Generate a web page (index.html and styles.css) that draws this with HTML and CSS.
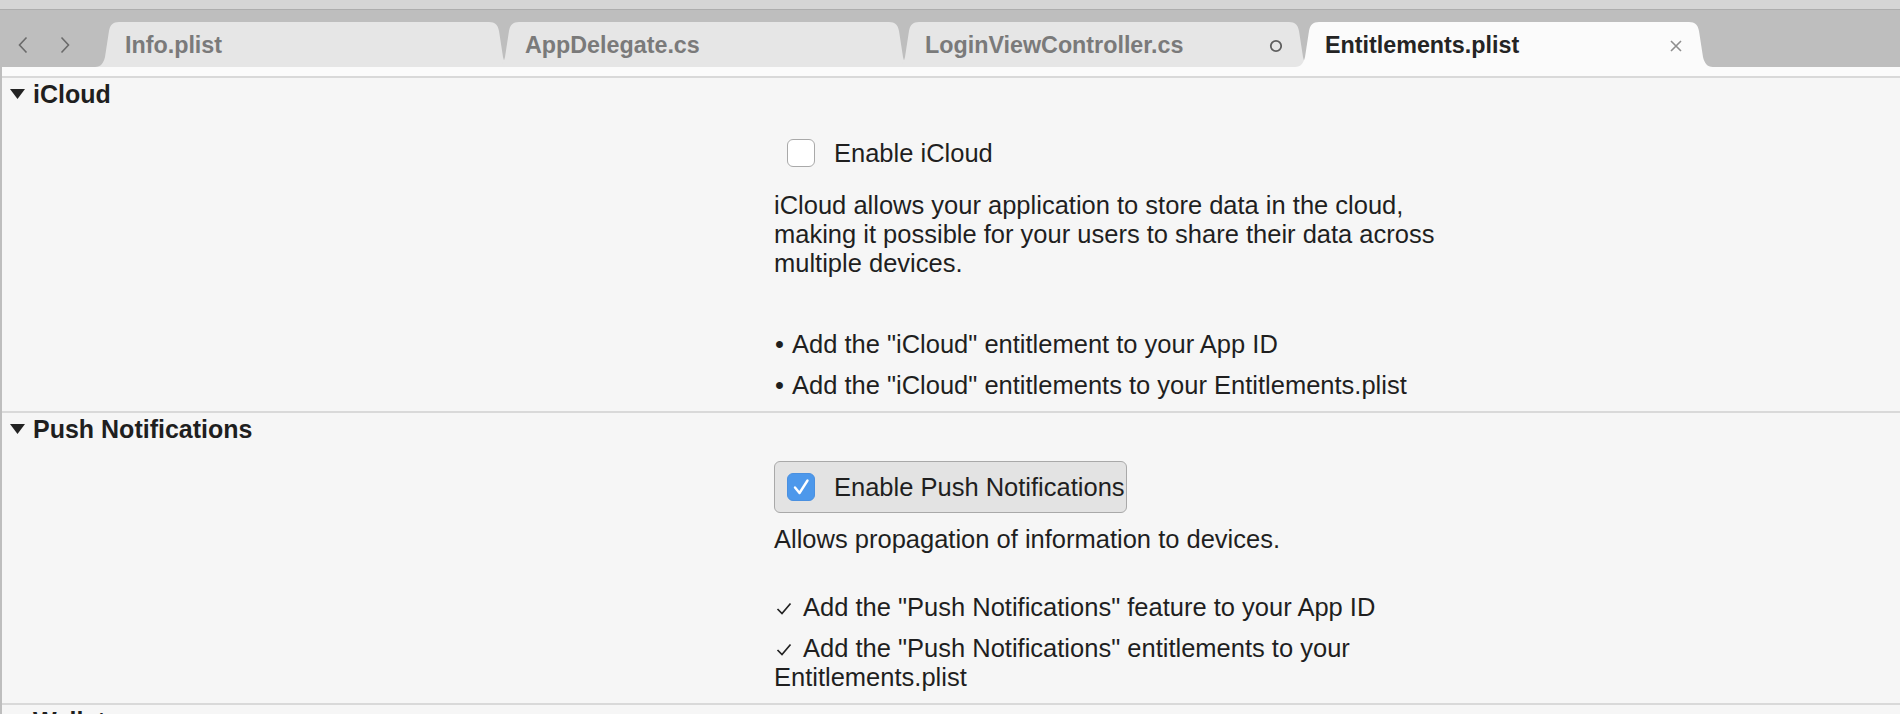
FILE: index.html
```html
<!DOCTYPE html>
<html lang="en">
<head>
<meta charset="utf-8">
<title>Entitlements.plist</title>
<link rel="stylesheet" href="styles.css">
</head>
<body>
<div class="window">
  <div class="titlestrip"></div>
  <div class="tabbar">
    <div class="nav">
      <svg class="chev" width="12" height="18" viewBox="0 0 12 18"><path d="M9.5 1.5 L2.5 9 L9.5 16.5" fill="none" stroke="#6a6a6a" stroke-width="1.6"/></svg>
      <svg class="chev" width="12" height="18" viewBox="0 0 12 18"><path d="M2.5 1.5 L9.5 9 L2.5 16.5" fill="none" stroke="#6a6a6a" stroke-width="1.6"/></svg>
    </div>
    <div class="tabs">
      <div class="tab"><span class="tab-label">Info.plist</span></div>
      <div class="tab"><span class="tab-label">AppDelegate.cs</span></div>
      <div class="tab"><span class="tab-label">LoginViewController.cs</span>
        <svg class="tab-icon" width="14" height="14" viewBox="0 0 14 14"><circle cx="7" cy="7" r="5.2" fill="none" stroke="#5f5f5f" stroke-width="1.8"/></svg>
      </div>
      <div class="tab active"><span class="tab-label">Entitlements.plist</span>
        <svg class="tab-icon" width="14" height="14" viewBox="0 0 14 14"><path d="M2 2 L12 12 M12 2 L2 12" stroke="#8e8e8e" stroke-width="1.6"/></svg>
      </div>
    </div>
  </div>
  <div class="editor">
    <div class="subbar"></div>

    <section class="cap cap-icloud">
      <h2 class="cap-head"><svg class="tri" width="15" height="10" viewBox="0 0 15 10"><path d="M0 0 H15 L7.5 10 Z" fill="#232323"/></svg>iCloud</h2>
      <div class="cap-body">
        <div class="toggle"><span class="box"></span><span class="toggle-label">Enable iCloud</span></div>
        <p class="desc">iCloud allows your application to store data in the cloud, making it possible for your users to share their data across multiple devices.</p>
        <ul class="steps">
          <li><span class="dot">•</span>Add the "iCloud" entitlement to your App ID</li>
          <li><span class="dot">•</span>Add the "iCloud" entitlements to your Entitlements.plist</li>
        </ul>
      </div>
    </section>

    <section class="cap cap-push">
      <h2 class="cap-head"><svg class="tri" width="15" height="10" viewBox="0 0 15 10"><path d="M0 0 H15 L7.5 10 Z" fill="#232323"/></svg>Push Notifications</h2>
      <div class="cap-body">
        <div class="toggle on"><span class="box checked"><svg width="28" height="28" viewBox="0 0 28 28"><path d="M8 14.5 L12.5 20 L20.5 7.5" fill="none" stroke="#ffffff" stroke-width="2.4" stroke-linecap="round" stroke-linejoin="round"/></svg></span><span class="toggle-label">Enable Push Notifications</span></div>
        <p class="desc">Allows propagation of information to devices.</p>
        <ul class="steps">
          <li><svg class="tick" width="16" height="13" viewBox="0 0 16 13"><path d="M1.5 7 L6 11.5 L14.5 1.5" fill="none" stroke="#222" stroke-width="1.7"/></svg>Add the "Push Notifications" feature to your App ID</li>
          <li><svg class="tick" width="16" height="13" viewBox="0 0 16 13"><path d="M1.5 7 L6 11.5 L14.5 1.5" fill="none" stroke="#222" stroke-width="1.7"/></svg>Add the "Push Notifications" entitlements to your Entitlements.plist</li>
        </ul>
      </div>
    </section>

    <section class="cap cap-wallet">
      <h2 class="cap-head"><svg class="tri" width="15" height="10" viewBox="0 0 15 10"><path d="M0 0 H15 L7.5 10 Z" fill="#232323"/></svg>Wallet</h2>
    </section>
  </div>
</div>
</body>
</html>
```

FILE: styles.css
```css
html, body {
  margin: 0;
  padding: 0;
  background: #f6f6f6;
  overflow: hidden;
}

body {
  font-family: "Liberation Sans", Arial, sans-serif;
  color: #1f1f1f;
}

.window {
  width: 1900px;
  height: 714px;
  overflow: hidden;
}

.titlestrip {
  height: 9px;
  background: #d5d5d5;
  border-bottom: 1px solid #adadad;
}

.tabbar {
  height: 57px;
  background: #bebebe;
  display: flex;
  align-items: flex-end;
}

.nav {
  width: 95px;
  height: 45px;
  display: flex;
  align-items: center;
  padding-left: 17px;
  gap: 30px;
  box-sizing: border-box;
  flex: none;
}

.chev {
  display: block;
  margin-top: 1px;
}

.tabs {
  display: flex;
  align-items: flex-end;
}

.tab {
  width: 418px;
  height: 45px;
  flex: none;
  display: flex;
  align-items: center;
  padding: 0 30px;
  box-sizing: border-box;
  background: #e6e6e6;
  color: #7a7a7a;
  font-weight: bold;
  font-size: 23.3px;
  clip-path: path("M0 45 C6 45 8.5 41 10 35 L14 9 C15 3 18 0 24 0 L394 0 C400 0 403 3 404 9 L408 35 C409.5 41 412 45 418 45 Z");
}

.tab + .tab {
  margin-left: -18px;
}

.tab.active {
  background: #fbfbfb;
  color: #242424;
}

.tab-label {
  flex: 1;
  padding-top: 2px;
}

.tab-icon {
  display: block;
  flex: none;
  margin-top: 2px;
}

.editor {
  border-left: 2px solid #bebebe;
  height: 648px;
  background: #f6f6f6;
}

.subbar {
  height: 9px;
  background: #fbfbfb;
  border-bottom: 2px solid #d9d9d9;
}

.cap {
  border-bottom: 2px solid #d9d9d9;
}

.cap-head {
  margin: 1px 0 0 0;
  height: 30px;
  display: flex;
  align-items: center;
  padding-left: 8px;
  font-size: 25px;
  line-height: 30px;
  font-weight: bold;
  color: #1f1f1f;
}

.tri {
  display: block;
  margin-right: 8px;
  flex: none;
}

.cap-body {
  padding-left: 772px;
  font-size: 25.5px;
  line-height: 29px;
}

.cap-icloud .cap-body {
  padding-top: 18px;
  padding-bottom: 11.5px;
}

.cap-push .cap-body {
  padding-top: 17px;
  padding-bottom: 11px;
}

.toggle {
  display: inline-flex;
  align-items: center;
  height: 52px;
  box-sizing: border-box;
  padding: 0 1px 0 12px;
  border: 1.5px solid transparent;
  border-radius: 6px;
  vertical-align: top;
}

.toggle.on {
  background: #e3e3e3;
  border-color: #a9a9a9;
}

.box {
  width: 28px;
  height: 28px;
  box-sizing: border-box;
  border: 1px solid #a9a9a9;
  border-radius: 6px;
  background: #ffffff;
  margin-right: 19px;
  flex: none;
  display: flex;
}

.box.checked {
  background: #4d98eb;
  border-color: #4a90e0;
}

.box svg {
  display: block;
  margin: -1px;
}

.toggle-label {
  color: #1f1f1f;
  padding-top: 1px;
}

.desc {
  max-width: 680px;
  margin: 11.5px 0 0 0;
}

.cap-push .desc {
  margin-top: 12px;
}

.steps {
  list-style: none;
  margin: 52px 0 0 0;
  padding: 0;
  max-width: 680px;
  display: flex;
  flex-direction: column;
  gap: 12px;
}

.cap-push .steps {
  margin-top: 39px;
}

.dot {
  margin: 0 8px 0 1px;
}

.tick {
  display: inline-block;
  margin: 0 11px 0 2px;
  vertical-align: 1px;
}

.cap-wallet {
  border-bottom: none;
}
```
